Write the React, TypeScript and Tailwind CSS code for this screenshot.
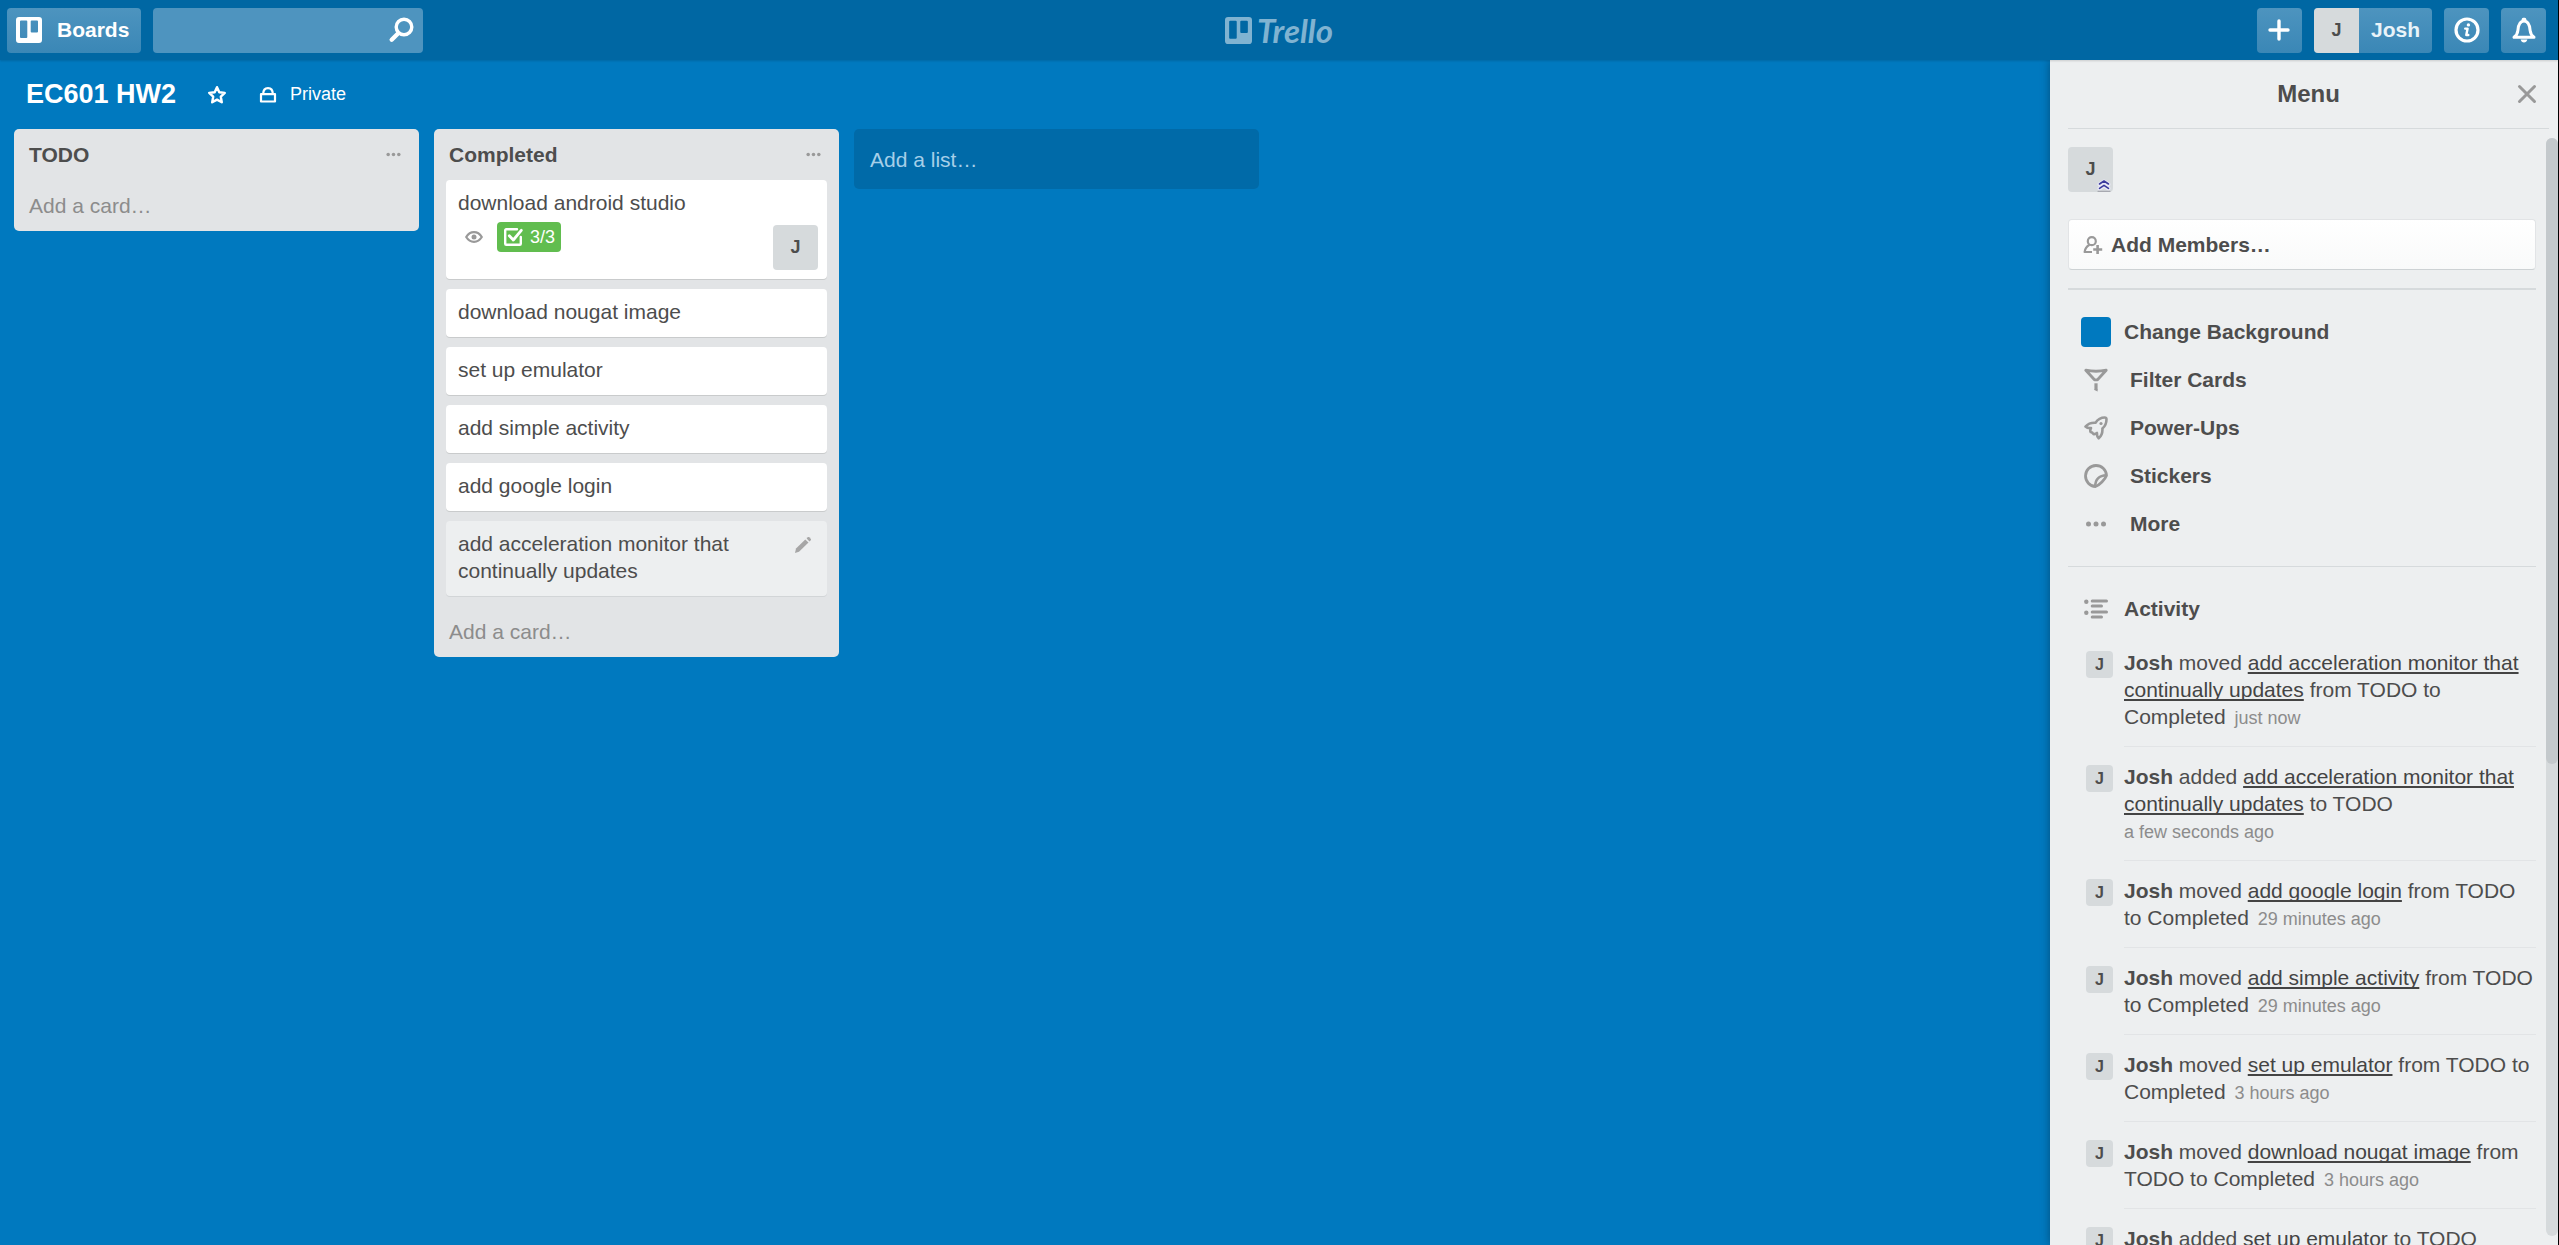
import React from "react";

type IconProps = { className?: string };

function BoardIcon({ className }: IconProps) {
  return (
    <svg viewBox="0 0 26 26" className={className} aria-hidden="true">
      <path
        fill="currentColor"
        fillRule="evenodd"
        d="M3 0h20a3 3 0 0 1 3 3v20a3 3 0 0 1-3 3H3a3 3 0 0 1-3-3V3a3 3 0 0 1 3-3zM5 3.500a1 1 0 0 0-1 1V20a1 1 0 0 0 1 1h5.300a1 1 0 0 0 1-1V4.500a1 1 0 0 0-1-1zM15.700 3.500a1 1 0 0 0-1 1v10a1 1 0 0 0 1 1H21a1 1 0 0 0 1-1v-10a1 1 0 0 0-1-1z"
      />
    </svg>
  );
}

function SearchIcon({ className }: IconProps) {
  return (
    <svg viewBox="0 0 26 26" className={className} fill="none" stroke="currentColor" strokeLinecap="round" aria-hidden="true">
      <circle cx="16" cy="10" r="7.800" strokeWidth="3.400" />
      <path d="M10 16.500 3.700 22.700" strokeWidth="4.400" />
    </svg>
  );
}

function PlusIcon({ className }: IconProps) {
  return (
    <svg viewBox="0 0 24 24" className={className} fill="none" stroke="currentColor" strokeWidth="3.400" strokeLinecap="round" aria-hidden="true">
      <path d="M12 3v18M3 12h18" />
    </svg>
  );
}

function InfoIcon({ className }: IconProps) {
  return (
    <svg viewBox="0 0 26 26" className={className} fill="none" stroke="currentColor" aria-hidden="true">
      <circle cx="13" cy="13" r="11" strokeWidth="3.200" />
      <circle cx="14.400" cy="7.900" r="1.700" fill="currentColor" stroke="none" />
      <path d="M11.200 11.600h2.400l-1.300 6.400h2" strokeWidth="2.400" strokeLinecap="round" strokeLinejoin="round" />
    </svg>
  );
}

function BellIcon({ className }: IconProps) {
  return (
    <svg viewBox="0 0 26 26" className={className} fill="none" stroke="currentColor" strokeWidth="3" strokeLinecap="round" strokeLinejoin="round" aria-hidden="true">
      <path d="M3 20.300h20c-2.200-1.600-3.500-3.500-3.900-7C18.600 7.500 17 4 13 4s-5.600 3.500-6.100 9.300c-.4 3.500-1.700 5.400-3.900 7z" />
      <path d="M12.200 2.200h1.600" />
      <path d="M9.600 22.500h6.800c-.6 1.900-1.700 3-3.400 3s-2.800-1.100-3.400-3z" fill="currentColor" stroke="none" />
    </svg>
  );
}

function StarIcon({ className }: IconProps) {
  return (
    <svg viewBox="0 0 20 20" className={className} fill="none" stroke="currentColor" strokeWidth="2.400" strokeLinejoin="round" aria-hidden="true">
      <path d="m10 2.200 2.300 5 5.500.7-4 3.800 1 5.600-4.800-2.700-4.800 2.700 1-5.600-4-3.800 5.500-.7z" />
    </svg>
  );
}

function LockIcon({ className }: IconProps) {
  return (
    <svg viewBox="0 0 18 18" className={className} fill="none" stroke="currentColor" strokeWidth="2.200" strokeLinejoin="round" aria-hidden="true">
      <path d="M2 8.200h14v7.300H2z" />
      <path d="M4.200 8.200C4.200 4.400 6 2.200 9 2.200s4.800 2.200 4.800 6" />
    </svg>
  );
}

function DotsIcon({ className }: IconProps) {
  return (
    <svg viewBox="0 0 24 24" className={className} fill="currentColor" aria-hidden="true">
      <circle cx="4.500" cy="12" r="2.500" />
      <circle cx="12" cy="12" r="2.500" />
      <circle cx="19.500" cy="12" r="2.500" />
    </svg>
  );
}

function EyeIcon({ className }: IconProps) {
  return (
    <svg viewBox="0 0 18 12" className={className} fill="none" stroke="currentColor" strokeWidth="2.200" strokeLinejoin="round" aria-hidden="true">
      <path d="M1.200 6c2-3.200 4.600-4.800 7.800-4.800s5.800 1.600 7.800 4.800c-2 3.200-4.600 4.800-7.800 4.800S3.200 9.200 1.200 6z" />
      <circle cx="9" cy="6" r="2.500" fill="currentColor" stroke="none" />
    </svg>
  );
}

function CheckIcon({ className }: IconProps) {
  return (
    <svg viewBox="0 0 20 20" className={className} fill="none" stroke="currentColor" strokeLinecap="round" strokeLinejoin="round" aria-hidden="true">
      <path d="M14 2.300H3.200a1 1 0 0 0-1 1v13.500a1 1 0 0 0 1 1h13.600a1 1 0 0 0 1-1V10" strokeWidth="2.400" />
      <path d="m6.300 8.800 4 4.200L18.300 3.300" strokeWidth="2.800" />
    </svg>
  );
}

function PencilIcon({ className }: IconProps) {
  return (
    <svg viewBox="0 0 16 16" className={className} fill="currentColor" aria-hidden="true">
      <path d="M10.300 2.400 13.500 5.600 4 14.700 0 16l1-4.400z" />
      <path d="M11.600 1.500 12.800.3a1 1 0 0 1 1.400 0l1.500 1.500a1 1 0 0 1 0 1.400L14.500 4.400z" />
    </svg>
  );
}

function CloseIcon({ className }: IconProps) {
  return (
    <svg viewBox="0 0 20 20" className={className} fill="none" stroke="currentColor" strokeWidth="3" strokeLinecap="round" aria-hidden="true">
      <path d="m2.500 2.500 15 15M17.500 2.500l-15 15" />
    </svg>
  );
}

function AddMemberIcon({ className }: IconProps) {
  return (
    <svg viewBox="0 0 20 18" className={className} fill="none" stroke="currentColor" strokeWidth="2.200" strokeLinejoin="round" aria-hidden="true">
      <circle cx="8.800" cy="5.200" r="4" />
      <path d="M6.500 8.800C3.500 10.500 2 12.500 1.600 16H9" />
      <path d="M14.600 9v9M10.200 13.500h9" strokeWidth="2.600" />
    </svg>
  );
}

function AdminBadge({ className }: IconProps) {
  return (
    <svg viewBox="0 0 14 13" className={className} fill="none" strokeLinecap="round" strokeLinejoin="round" aria-hidden="true">
      <path d="m2.500 5.500 4.500-3 4.500 3M2.500 9.500l4.500-3 4.500 3" stroke="#e8e8f6" strokeWidth="4" />
      <path d="M1 12.300h12" stroke="#a7a9b0" strokeWidth="1.200" />
      <path d="m2.500 5 4.500-3 4.500 3M2.500 9.300l4.500-3 4.500 3" stroke="#3a3a9c" strokeWidth="1.600" />
    </svg>
  );
}

function FilterIcon({ className }: IconProps) {
  return (
    <svg viewBox="0 0 24 24" className={className} fill="none" stroke="currentColor" strokeWidth="2.800" strokeLinejoin="round" strokeLinecap="round" aria-hidden="true">
      <path d="M1.800 2.200c6.800 1.400 13.600 1.400 20.400 0L13.500 11.800h-3z" />
      <path d="M12 15.300v6.400" strokeWidth="3.200" strokeLinecap="butt" />
      <path d="M10.400 21h3.200v2.600l-3.200-1.600z" fill="currentColor" stroke="none" />
    </svg>
  );
}

function RocketIcon({ className }: IconProps) {
  return (
    <svg viewBox="0 0 24 24" className={className} fill="none" stroke="currentColor" strokeWidth="2.600" strokeLinejoin="round" aria-hidden="true">
      <path d="M22.500 3.200c0-1-.7-1.700-1.700-1.700-4 0-7 1.800-9.300 5.200C7.500 6.500 4 7.600 1.500 10.500c1.500 1.400 3.300 1.800 5.500 1.500-.8 1.400-1 2.800-.3 4 1.200.2 2 .7 2.700 2 1 .3 2.400 0 3.600-1-.2 2 .3 4 1.700 5.300 2.800-2.500 4-5.700 3.700-9.800 2.700-2.300 4.100-5.300 4.100-9.300z" />
      <circle cx="17" cy="7.500" r="1.600" fill="currentColor" stroke="none" />
    </svg>
  );
}

function StickerIcon({ className }: IconProps) {
  return (
    <svg viewBox="0 0 24 24" className={className} fill="none" stroke="currentColor" strokeWidth="2.800" strokeLinejoin="round" aria-hidden="true">
      <path d="M11.500 22.500A10.500 10.500 0 1 1 22.500 11.500c-1.500 4-7 9.500-11 11z" />
      <path d="M11.300 22.500C11 15.500 15 11.500 22.500 11.300" strokeWidth="2.600" />
    </svg>
  );
}

function ActivityIcon({ className }: IconProps) {
  return (
    <svg viewBox="0 0 24 20" className={className} fill="none" stroke="currentColor" strokeWidth="3" strokeLinecap="round" aria-hidden="true">
      <path d="M8.200 2h14.300M8.200 7.100h9.300M8.200 12.900h14.300M8.200 18h9.300" />
      <circle cx="2.300" cy="2.700" r="2.200" fill="currentColor" stroke="none" />
      <circle cx="2.300" cy="13.800" r="2.200" fill="currentColor" stroke="none" />
    </svg>
  );
}

const headerButton =
  "flex h-[45px] items-center rounded bg-linear-to-b from-[#4d94bf] to-[#3a87b6] text-white";

function Header() {
  return (
    <header className="relative z-10 grid h-[60px] shrink-0 grid-cols-[1fr_auto_1fr] items-center bg-[#0067a3] shadow-[0_1px_2px_rgba(0,0,0,0.15)]">
      <div className="flex gap-3 pl-[7px]">
        <button type="button" className={headerButton + " gap-[15px] pr-3 pl-[9px] text-[21px] font-bold text-[#e9f3f9]"}>
          <BoardIcon className="size-[26px] text-white" />
          Boards
        </button>
        <div className="relative w-[270px]">
          <input
            type="text"
            aria-label="Search"
            className="h-[45px] w-full rounded bg-[#4e94bf] pr-12 pl-3 text-[21px] text-white outline-none"
          />
          <SearchIcon className="pointer-events-none absolute top-[9px] right-[9px] size-[26px] text-white" />
        </div>
      </div>
      <a href="#home" className="flex items-center gap-[5px] text-[#80b3d1]">
        <BoardIcon className="size-[27px]" />
        <span className="font-[Lato,'Liberation_Sans',sans-serif] text-[33px] leading-[33px] font-bold italic">Trello</span>
      </a>
      <div className="flex justify-end gap-3 pr-3">
        <button type="button" aria-label="Create" className={headerButton + " w-[45px] justify-center"}>
          <PlusIcon className="size-6" />
        </button>
        <button type="button" className={headerButton + " overflow-hidden"}>
          <span className="flex size-[45px] items-center justify-center bg-[#d6dadc] text-[18px] font-bold text-[#4d4d4d]">J</span>
          <span className="px-3 text-[21px] font-bold text-[#e9f3f9]">Josh</span>
        </button>
        <button type="button" aria-label="Information" className={headerButton + " w-[45px] justify-center"}>
          <InfoIcon className="size-[26px]" />
        </button>
        <button type="button" aria-label="Notifications" className={headerButton + " w-[45px] justify-center"}>
          <BellIcon className="size-[26px]" />
        </button>
      </div>
    </header>
  );
}

function Card({ children }: { children: React.ReactNode }) {
  return (
    <article className="rounded bg-white px-3 pt-[9px] pb-3 shadow-[0_1px_0_#c9cbcc]">{children}</article>
  );
}

function List({ title, children }: { title: string; children?: React.ReactNode }) {
  return (
    <section className="w-[405px] shrink-0 rounded-[5px] bg-[#e2e4e6]">
      <div className="flex items-center justify-between py-3 pr-[17px] pl-[15px]">
        <h2 className="leading-[27px] font-bold">{title}</h2>
        <button type="button" aria-label={title + " list actions"} className="text-[#999999]">
          <DotsIcon className="size-[17px]" />
        </button>
      </div>
      {children && <div className="flex flex-col gap-[10px] px-3 pb-[10px]">{children}</div>}
      <button type="button" className="block w-full px-[15px] py-3 text-left leading-[27px] text-[#8c8c8c]">
        Add a card…
      </button>
    </section>
  );
}

const simpleCards = ["download nougat image", "set up emulator", "add simple activity", "add google login"];

function Board() {
  return (
    <main className="flex min-w-0 flex-1 flex-col">
      <div className="flex h-[69px] items-center pl-[26px] text-white">
        <h1 className="text-[27px] leading-[33px] font-bold">EC601 HW2</h1>
        <button type="button" aria-label="Star board" className="ml-[31px]">
          <StarIcon className="size-5" />
        </button>
        <button type="button" className="ml-8 flex items-center gap-[13px] text-[18px]">
          <LockIcon className="size-[18px]" />
          Private
        </button>
      </div>
      <div className="flex items-start gap-[15px] pl-[14px]">
        <List title="TODO" />
        <List title="Completed">
          <Card>
            <div className="-mb-[3px] min-h-[81px]">
              <p className="leading-[27px]">download android studio</p>
              <div className="-mr-[3px] flex items-start justify-between">
                <div className="mt-[6px] flex items-center pl-[7px] text-[18px]">
                  <EyeIcon className="h-3 w-[18px] text-[#999999]" />
                  <span className="ml-[14px] flex h-[30px] items-center gap-[7px] rounded bg-[#61bd4f] px-[6px] text-white">
                    <CheckIcon className="size-5" />
                    3/3
                  </span>
                </div>
                <span className="mt-[9px] flex size-[45px] items-center justify-center rounded bg-[#d6dadc] text-[18px] font-bold">J</span>
              </div>
            </div>
          </Card>
          {simpleCards.map((name) => (
            <Card key={name}>
              <p className="leading-[27px]">{name}</p>
            </Card>
          ))}
          <article className="flex items-start justify-between rounded bg-[#edeff0] pt-[9px] pr-4 pb-3 pl-3 shadow-[0_1px_0_#d2d5d7]">
            <p className="w-[300px] leading-[27px]">add acceleration monitor that continually updates</p>
            <button type="button" aria-label="Edit card" className="mt-[7px] text-[#a6a6a6]">
              <PencilIcon className="size-4" />
            </button>
          </article>
        </List>
        <button
          type="button"
          className="w-[405px] shrink-0 rounded-[5px] bg-[#006aa8] px-4 pt-[17px] pb-4 text-left leading-[27px] text-[#a6cfe8]"
        >
          Add a list…
        </button>
      </div>
    </main>
  );
}

type Entry = { verb: string; card: string; rest: string; time: string };

const activity: Entry[] = [
  { verb: "moved", card: "add acceleration monitor that continually updates", rest: "from TODO to Completed", time: "just now" },
  { verb: "added", card: "add acceleration monitor that continually updates", rest: "to TODO", time: "a few seconds ago" },
  { verb: "moved", card: "add google login", rest: "from TODO to Completed", time: "29 minutes ago" },
  { verb: "moved", card: "add simple activity", rest: "from TODO to Completed", time: "29 minutes ago" },
  { verb: "moved", card: "set up emulator", rest: "from TODO to Completed", time: "3 hours ago" },
  { verb: "moved", card: "download nougat image", rest: "from TODO to Completed", time: "3 hours ago" },
  { verb: "added", card: "set up emulator", rest: "to TODO", time: "3 hours ago" },
];

const menuItems = [
  { label: "Filter Cards", Icon: FilterIcon },
  { label: "Power-Ups", Icon: RocketIcon },
  { label: "Stickers", Icon: StickerIcon },
  { label: "More", Icon: DotsIcon },
];

function Menu() {
  return (
    <aside className="relative flex w-[508px] shrink-0 flex-col bg-[#edeff0] shadow-[0_0_9px_rgba(0,0,0,0.35)]">
      <div className="relative mr-[9px] ml-[18px] flex h-[69px] shrink-0 items-center justify-center border-b border-[#d6dadc]">
        <h2 className="text-[24px] leading-[30px] font-bold">Menu</h2>
        <button type="button" aria-label="Close menu" className="absolute right-3 text-[#999999]">
          <CloseIcon className="size-5" />
        </button>
      </div>
      <div className="flex min-h-0 flex-1">
        <div className="min-w-0 flex-1 overflow-hidden pt-[18px] pr-[10px] pl-[18px]">
          <button
            type="button"
            aria-label="Josh, admin"
            className="relative flex size-[45px] items-center justify-center rounded bg-[#d6dadc] text-[18px] font-bold"
          >
            J
            <AdminBadge className="absolute right-[2px] bottom-0 h-[13px] w-[14px]" />
          </button>
          <button
            type="button"
            className="mt-[27px] flex h-[51px] w-full items-center gap-2 rounded border border-[#e2e4e6] border-b-[#cdd2d4] bg-linear-to-b from-white to-[#f9fafa] px-[14px] font-bold"
          >
            <AddMemberIcon className="h-[18px] w-5 text-[#999999]" />
            Add Members…
          </button>
          <hr className="mt-[18px] border-t-2 border-[#d6dadc]" />
          <nav className="py-[18px] font-bold">
            <button type="button" className="flex h-12 w-full items-center gap-[13px] pl-[13px]">
              <span className="size-[30px] rounded bg-[#0079bf]" />
              Change Background
            </button>
            {menuItems.map(({ label, Icon }) => (
              <button key={label} type="button" className="flex h-12 w-full items-center gap-[22px] pl-4">
                <Icon className="size-6 text-[#999999]" />
                {label}
              </button>
            ))}
          </nav>
          <hr className="border-t border-[#d6dadc]" />
          <h3 className="mt-[18px] flex h-12 items-center gap-4 pl-4 font-bold">
            <ActivityIcon className="h-5 w-6 text-[#999999]" />
            Activity
          </h3>
          <ul>
            {activity.map((entry, i) => (
              <li key={i} className="flex gap-[11px] pl-[18px]">
                <span className="mt-[18px] flex size-[27px] shrink-0 items-center justify-center rounded bg-[#d6dadc] text-[16px] font-bold">
                  J
                </span>
                <p className="flex-1 border-b border-[#e2e4e6] py-4 leading-[27px]">
                  <b>Josh</b> {entry.verb}{" "}
                  <a
                    href="#card"
                    className="text-[#444444] underline decoration-2 underline-offset-2 [text-decoration-skip-ink:none]"
                  >
                    {entry.card}
                  </a>{" "}
                  {entry.rest}
                  {entry.rest === "to TODO" && entry.time.length > 12 ? <br /> : <span className="pr-[3px]"> </span>}
                  <span className="text-[18px] leading-none whitespace-nowrap text-[#8c8c8c]">{entry.time}</span>
                </p>
              </li>
            ))}
          </ul>
        </div>
        <div className="my-[9px] w-3 rounded-md bg-[#d6dadc]">
          <div className="h-[57%] rounded-md bg-[#c4c9cc]" />
        </div>
      </div>
    </aside>
  );
}

export default function App() {
  return (
    <div className="flex h-screen flex-col overflow-hidden border-r border-black bg-[#0079bf] font-['Liberation_Sans',Arial,sans-serif] text-[21px] text-[#4d4d4d]">
      <Header />
      <div className="flex min-h-0 flex-1">
        <Board />
        <Menu />
      </div>
    </div>
  );
}
